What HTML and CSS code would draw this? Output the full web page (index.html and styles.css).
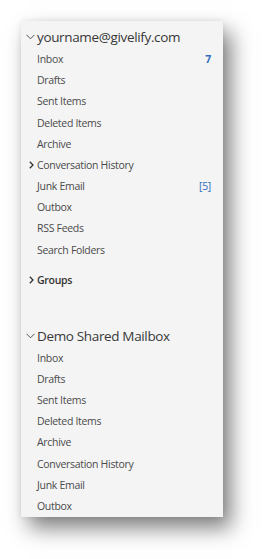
FILE: index.html
```html
<!DOCTYPE html>
<html lang="en">
<head>
    <meta charset="UTF-8">
    <meta name="viewport" content="width=device-width, initial-scale=1.0">
    <title>Folder Pane</title>
    <link rel="stylesheet" href="styles.css">
</head>
<body>
    <div class="pane">
        <!-- Primary mailbox -->
        <div class="account">
            <svg class="chev-down" width="9" height="6" viewBox="0 0 9 6"><path d="M0.5 0.8 L4.5 4.8 L8.5 0.8" fill="none" stroke="#555" stroke-width="1"/></svg>
            <span>yourname@givelify.com</span>
        </div>
        <div class="folder"><span>Inbox</span><span class="count bold">7</span></div>
        <div class="folder"><span>Drafts</span></div>
        <div class="folder"><span>Sent Items</span></div>
        <div class="folder"><span>Deleted Items</span></div>
        <div class="folder"><span>Archive</span></div>
        <div class="folder">
            <svg class="chev-right" width="5" height="8" viewBox="0 0 5 8"><path d="M0.8 0.7 L4 4 L0.8 7.3" fill="none" stroke="#333" stroke-width="1.3"/></svg>
            <span>Conversation History</span>
        </div>
        <div class="folder"><span>Junk Email</span><span class="count">[5]</span></div>
        <div class="folder"><span>Outbox</span></div>
        <div class="folder"><span>RSS Feeds</span></div>
        <div class="folder"><span>Search Folders</span></div>

        <div class="folder groups">
            <svg class="chev-right" width="5" height="8" viewBox="0 0 5 8"><path d="M0.8 0.7 L4 4 L0.8 7.3" fill="none" stroke="#333" stroke-width="1.3"/></svg>
            <span>Groups</span>
        </div>

        <!-- Shared mailbox -->
        <div class="account shared">
            <svg class="chev-down" width="9" height="6" viewBox="0 0 9 6"><path d="M0.5 0.8 L4.5 4.8 L8.5 0.8" fill="none" stroke="#555" stroke-width="1"/></svg>
            <span>Demo Shared Mailbox</span>
        </div>
        <div class="folder"><span>Inbox</span></div>
        <div class="folder"><span>Drafts</span></div>
        <div class="folder"><span>Sent Items</span></div>
        <div class="folder"><span>Deleted Items</span></div>
        <div class="folder"><span>Archive</span></div>
        <div class="folder"><span>Conversation History</span></div>
        <div class="folder"><span>Junk Email</span></div>
        <div class="folder"><span>Outbox</span></div>
    </div>
</body>
</html>
```

FILE: styles.css
```css
body {
    margin: 0;
    padding: 21px 0 0 21px;
    background-color: #fff;
    font-family: 'Open Sans', 'Noto Sans', sans-serif;
    height: 559px;
    box-sizing: border-box;
    overflow: hidden;
}

.pane {
    width: 202px;
    height: 496px;
    box-sizing: border-box;
    background-color: #f4f4f4;
    padding-top: 5px;
    box-shadow: 8px 11px 20px rgba(0, 0, 0, 0.5), 0 0 6px rgba(0, 0, 0, 0.08);
    overflow: hidden;
}

.account {
    display: flex;
    align-items: center;
    height: 22.4px;
    font-size: 13.5px;
    letter-spacing: -0.35px;
    color: #383838;
}

.account .chev-down {
    margin-left: 5px;
    margin-right: 2px;
}

.account.shared {
    margin-top: 34.2px;
}

.folder {
    display: flex;
    align-items: center;
    height: 21.2px;
    padding-left: 16px;
    padding-right: 12px;
    font-size: 10.5px;
    letter-spacing: -0.3px;
    color: #4a4a4a;
    position: relative;
}

.folder .chev-right {
    position: absolute;
    left: 8px;
    top: 7px;
}

.folder .count {
    margin-left: auto;
    color: #2f6fbd;
}

.folder .count.bold {
    font-weight: 700;
}

.groups {
    margin-top: 9px;
    font-weight: 600;
    color: #333;
}
```
